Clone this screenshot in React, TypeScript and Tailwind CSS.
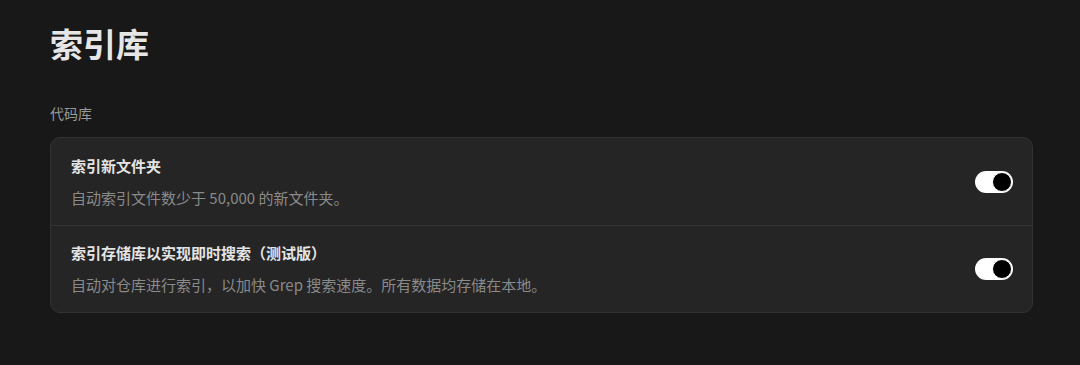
import React from 'react';

const font = { fontFamily: '"Noto Sans CJK SC", "Noto Sans", sans-serif' };

const Toggle: React.FC<{ on: boolean }> = ({ on }) => (
  <div
    className={`w-[38px] h-[22px] rounded-full flex items-center p-[1px] ${
      on ? 'bg-white justify-end' : 'bg-[#444] justify-start'
    }`}
  >
    <div className="w-[20px] h-[20px] rounded-full bg-black border border-white" />
  </div>
);

const rows = [
  {
    title: '索引新文件夹',
    desc: '自动索引文件数少于 50,000 的新文件夹。',
  },
  {
    title: '索引存储库以实现即时搜索（测试版）',
    desc: '自动对仓库进行索引，以加快 Grep 搜索速度。所有数据均存储在本地。',
  },
];

export default function App() {
  return (
    <div className="w-[1080px] h-[365px] bg-[#181818] pl-[50px] pr-[47px] pt-[21px]" style={font}>
      <h1 className="text-[33px] leading-[44px] font-semibold text-[#e6e6e6]">索引库</h1>
      <div className="mt-[38px] text-[14px] leading-[20px] text-[#999]">代码库</div>
      <div className="mt-[14px] rounded-[10px] border border-[#323232] bg-[#252525]">
        {rows.map((r, i) => (
          <div
            key={r.title}
            className={`h-[87px] flex items-center justify-between pl-[20px] pr-[19px] ${
              i > 0 ? 'border-t border-[#333]' : ''
            }`}
          >
            <div className="flex flex-col gap-[12px]">
              <div className="text-[15px] leading-[20px] font-semibold text-[#e4e4e4]">{r.title}</div>
              <div className="text-[15px] leading-[20px] text-[#8a8a8a]">{r.desc}</div>
            </div>
            <Toggle on />
          </div>
        ))}
      </div>
    </div>
  );
}
